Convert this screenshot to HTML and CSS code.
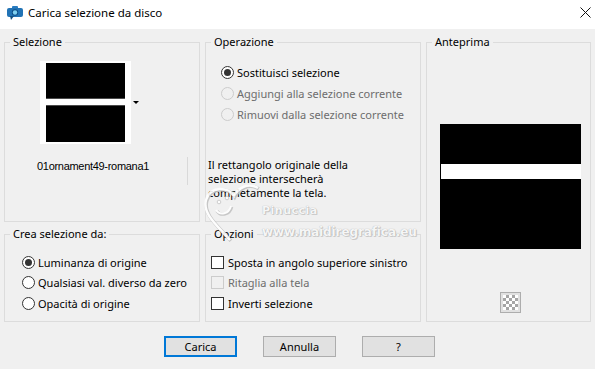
FILE: index.html
```html
<!DOCTYPE html>
<html lang="it">
<head>
    <meta charset="UTF-8">
    <title>Carica selezione da disco</title>
    <link rel="stylesheet" href="styles.css">
</head>
<body>
    <div class="window">
        <div class="titlebar">
            <svg class="app-icon" width="16" height="14" viewBox="0 0 16 14">
                <rect x="5" y="0" width="6" height="3" rx="1" fill="#2a7cc0"/>
                <rect x="0" y="2" width="16" height="9" rx="2" fill="#2173b5"/>
                <path d="M3 10 L7 10 L4 14 Z" fill="#15507f"/>
                <circle cx="8" cy="6.5" r="3.2" fill="#0d4f86"/>
                <circle cx="8" cy="6.5" r="2.2" fill="#7fd0f0"/>
            </svg>
            <span class="title">Carica selezione da disco</span>
            <svg class="close" width="11" height="11" viewBox="0 0 11 11">
                <path d="M0.5 0.5 L10.5 10.5 M10.5 0.5 L0.5 10.5" stroke="#111" stroke-width="1"/>
            </svg>
        </div>

        <div class="content">
            <fieldset class="group sel">
                <legend>Selezione</legend>
                <div class="thumb-row">
                    <div class="thumb">
                        <div class="thumb-top"></div>
                        <div class="thumb-bottom"></div>
                    </div>
                    <span class="drop-arrow"></span>
                </div>
                <div class="file-row">
                    <span class="file-name">01ornament49-romana1</span>
                    <span class="file-sep"></span>
                </div>
            </fieldset>

            <fieldset class="group op">
                <legend>Operazione</legend>
                <div class="choices">
                    <div class="choice"><span class="radio checked"></span>Sostituisci selezione</div>
                    <div class="choice disabled"><span class="radio"></span>Aggiungi alla selezione corrente</div>
                    <div class="choice disabled"><span class="radio"></span>Rimuovi dalla selezione corrente</div>
                </div>
                <p class="note">Il rettangolo originale della<br>selezione intersecherà<br>completamente la tela.</p>
            </fieldset>

            <fieldset class="group preview">
                <legend>Anteprima</legend>
                <div class="preview-img">
                    <div class="preview-band"></div>
                </div>
                <button class="checker" type="button"></button>
            </fieldset>

            <fieldset class="group source">
                <legend>Crea selezione da:</legend>
                <div class="choices">
                    <div class="choice"><span class="radio checked"></span>Luminanza di origine</div>
                    <div class="choice"><span class="radio"></span>Qualsiasi val. diverso da zero</div>
                    <div class="choice"><span class="radio"></span>Opacità di origine</div>
                </div>
            </fieldset>

            <fieldset class="group opts">
                <legend>Opzioni</legend>
                <div class="choices">
                    <div class="choice"><span class="check"></span>Sposta in angolo superiore sinistro</div>
                    <div class="choice disabled"><span class="check"></span>Ritaglia alla tela</div>
                    <div class="choice"><span class="check"></span>Inverti selezione</div>
                </div>
            </fieldset>

            <!-- watermark stamped over the screenshot -->
            <div class="watermark">
                <svg class="wm-heart" width="62" height="60" viewBox="0 0 62 60">
                    <path d="M56 6 C46 0 36 6 32 14 C26 4 8 4 4 18 C0 32 16 44 28 58" fill="none" stroke="#c2c2c2" stroke-width="3.5" transform="translate(0.8 0.8)"/>
                    <path d="M56 6 C46 0 36 6 32 14 C26 4 8 4 4 18 C0 32 16 44 28 58" fill="none" stroke="#fff" stroke-width="2.5"/>
                    <circle cx="17" cy="20" r="1.8" fill="#fff" stroke="#b8b8b8" stroke-width="0.7"/>
                    <circle cx="25" cy="16" r="1.8" fill="#fff" stroke="#b8b8b8" stroke-width="0.7"/>
                    <path d="M14 28 C18 34 27 32 29 24" fill="none" stroke="#c2c2c2" stroke-width="3" transform="translate(0.8 0.8)"/>
                    <path d="M14 28 C18 34 27 32 29 24" fill="none" stroke="#fff" stroke-width="2"/>
                </svg>
                <span class="wm-name">Pinuccia</span>
                <span class="wm-url">www.maidiregrafica.eu</span>
            </div>
        </div>

        <div class="actions">
            <button class="btn default" type="button">Carica</button>
            <button class="btn" type="button">Annulla</button>
            <button class="btn" type="button">?</button>
        </div>
    </div>
</body>
</html>
```

FILE: styles.css
```css
body {
    margin: 0;
    font-family: "Noto Sans", "Open Sans", sans-serif;
    font-size: 11px;
    color: #000;
    background-color: #f0f0f0;
}

.window {
    width: 595px;
    height: 369px;
    background-color: #f0f0f0;
    overflow: hidden;
}

.titlebar {
    height: 29px;
    box-sizing: border-box;
    background-color: #fff;
    display: flex;
    align-items: flex-start;
    padding: 6px 4px 0 7px;
}

.title {
    margin-left: 5px;
    margin-top: -1px;
    line-height: 16px;
    font-size: 11.5px;
}

.close {
    margin-left: auto;
    margin-top: 1px;
}

.content {
    position: relative;
    display: grid;
    grid-template-columns: 196px 216px 165px;
    grid-template-rows: 188px 96px;
    column-gap: 5px;
    row-gap: 4px;
    padding: 5px 0 0 4px;
}

.group {
    margin: 0;
    padding: 0;
    min-width: 0;
    border: 1px solid #dcdcdc;
}

.group legend {
    margin-left: 5px;
    padding: 0 3px;
    line-height: 16px;
}

/* Selezione */
.thumb-row {
    display: flex;
    align-items: center;
    padding: 11px 0 0 35px;
}

.thumb {
    width: 91px;
    height: 83px;
    box-sizing: border-box;
    background-color: #fff;
    padding: 2px 6px;
}

.thumb-top {
    height: 35px;
    background-color: #000;
    border-bottom: 1px solid #4a4a4a;
}

.thumb-bottom {
    height: 36px;
    margin-top: 6px;
    background-color: #000;
    border-top: 1px solid #4a4a4a;
}

.drop-arrow {
    margin-left: 2px;
    width: 0;
    height: 0;
    border-left: 3px solid transparent;
    border-right: 3px solid transparent;
    border-top: 3px solid #000;
}

.file-row {
    display: flex;
    margin-top: 13px;
    padding-left: 32px;
}

.file-name {
    width: 150px;
    padding-top: 3px;
    font-family: "Liberation Sans", Arial, sans-serif;
    font-size: 11px;
    letter-spacing: -0.3px;
    line-height: 13px;
}

.file-sep {
    width: 1px;
    height: 28px;
    background-color: #d9d9d9;
}

/* radio / checkbox rows */
.choices {
    display: flex;
    flex-direction: column;
}

.choice {
    display: flex;
    align-items: center;
    white-space: nowrap;
}

.choice.disabled {
    color: #6d6d6d;
}

.radio {
    width: 11px;
    height: 11px;
    border: 1px solid #333;
    border-radius: 50%;
    background-color: #fff;
    margin-right: 3px;
    display: flex;
    align-items: center;
    justify-content: center;
}

.radio.checked::after {
    content: "";
    width: 7px;
    height: 7px;
    border-radius: 50%;
    background-color: #333;
}

.disabled .radio,
.disabled .check {
    border-color: #cccccc;
    background-color: #f0f0f0;
}

.check {
    width: 11px;
    height: 11px;
    border: 1px solid #333;
    background-color: #fff;
    margin-right: 4px;
}

/* Operazione */
.op .choices {
    padding: 11px 0 0 15px;
}

.op .choice {
    height: 22px;
}

.op .choice + .choice {
    height: 21px;
}

.note {
    margin: 33px 0 0 2px;
    line-height: 14px;
}

/* Anteprima */
.preview {
    grid-row: 1 / span 2;
    grid-column: 3;
}

.preview-img {
    width: 141px;
    height: 125px;
    margin: 74px 0 0 13px;
    padding-top: 40px;
    box-sizing: border-box;
    background-color: #000;
}

.preview-band {
    height: 15px;
    margin-left: 1px;
    background-color: #fff;
}

.checker {
    display: block;
    width: 21px;
    height: 21px;
    margin: 43px 0 0 73px;
    padding: 0;
    border: 1px solid #adadad;
    background-color: #e1e1e1;
    background-image: repeating-conic-gradient(#a6a6a6 0 25%, #ffffff 0 50%);
    background-size: 6px 6px;
    background-position: 2px 2px;
    box-sizing: border-box;
    box-shadow: inset 0 0 0 2px #e1e1e1;
}

/* Crea selezione da */
.source .choices {
    padding: 10px 0 0 17px;
}

.source .choice,
.opts .choice {
    height: 20.5px;
}

/* Opzioni */
.opts .choices {
    padding: 10px 0 0 5px;
}

/* watermark */
.watermark {
    position: absolute;
    left: 202px;
    top: 153px;
    width: 225px;
    height: 60px;
    pointer-events: none;
}

.wm-heart {
    position: absolute;
    left: 0;
    top: 0;
    opacity: 0.9;
}

.wm-name,
.wm-url {
    position: absolute;
    font-family: "DejaVu Sans", sans-serif;
    font-weight: bold;
    color: rgba(255, 255, 255, 0.92);
    text-shadow: 0 0 1px #9a9a9a, 1px 1px 0 #cfcfcf;
    white-space: nowrap;
    line-height: 14px;
}

.wm-name {
    left: 60px;
    top: 22px;
    font-size: 11px;
    letter-spacing: 0.5px;
}

.wm-url {
    left: 60px;
    top: 43px;
    font-size: 12px;
    letter-spacing: -0.1px;
}

/* bottom buttons */
.actions {
    display: flex;
    gap: 26px;
    padding: 14px 0 0 164px;
}

.btn {
    width: 73px;
    height: 21px;
    padding: 0;
    font-family: "Noto Sans", "Open Sans", sans-serif;
    font-size: 11px;
    color: #000;
    background-color: #e1e1e1;
    border: 1px solid #adadad;
    box-sizing: border-box;
}

.btn.default {
    border: 2px solid #0078d7;
}
```
